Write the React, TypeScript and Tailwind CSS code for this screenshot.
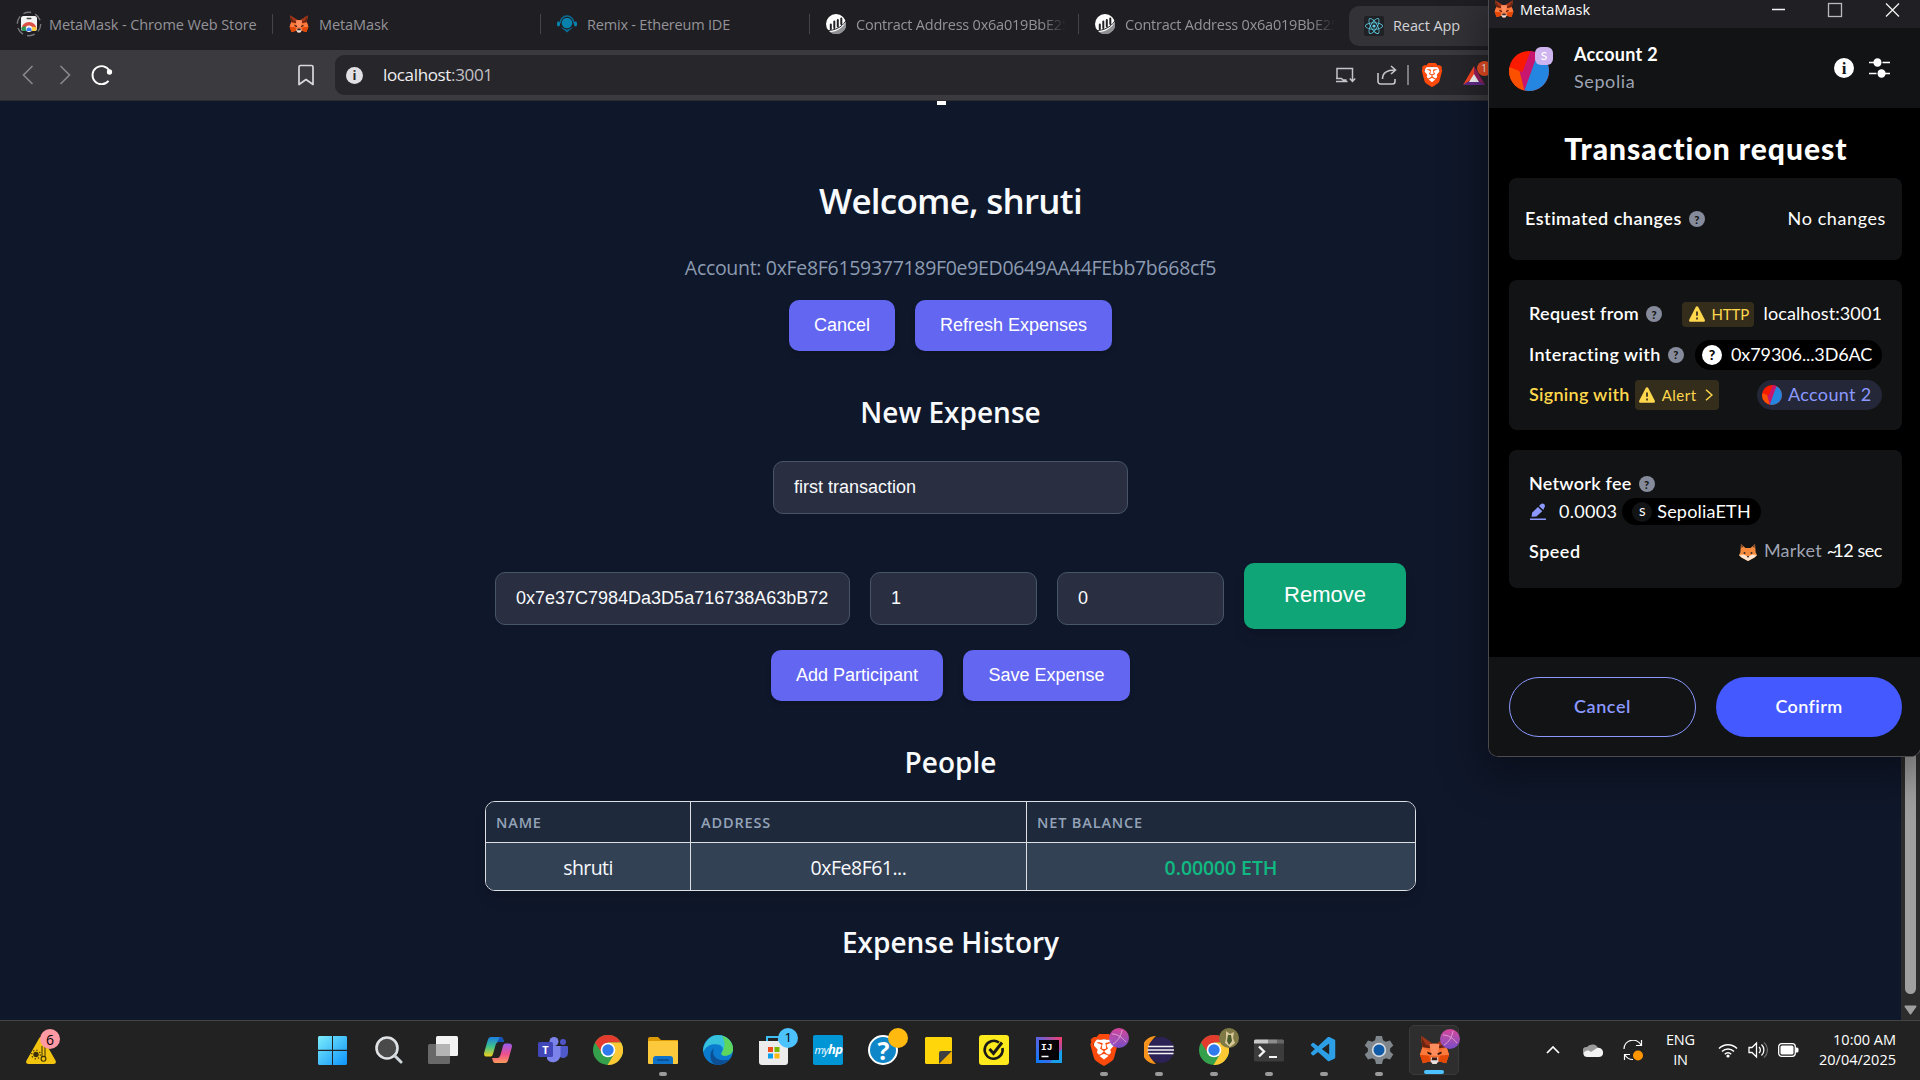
import type { ReactNode } from "react";
import { FaReact } from "react-icons/fa";
import { SiBrave } from "react-icons/si";
import { VscVscode } from "react-icons/vsc";

/* ---------- icons ---------- */

function Fox({ className }: { className: string }) {
  return (
    <svg viewBox="0 0 32 32" className={className} preserveAspectRatio="none">
      <path d="M2 1 13.5 9h5L30 1l-1.5 12L31 21l-3 9-8-2-2 3h-4l-2-3-8 2-3-9 2.500-8z" fill="#f5692a" />
      <path d="M2 1 13.500 9 11 14 3.500 13zM30 1 18.500 9 21 14l7.500-1z" fill="#6b2410" />
      <path d="M2 1l5 9 5 2 1.500-3zM30 1l-5 9-5 2-1.500-3z" fill="#a3361a" />
      <path d="M11 9.500h10L19.500 22h-7z" fill="#ff8d5d" />
      <path d="M1 21h9l2 7-8 2zM31 21h-9l-2 7 8 2z" fill="#e34807" />
      <path d="M3.500 13 11 17l1.500 5L1 21zM28.500 13 21 17l-1.500 5L31 21z" fill="#ff7a3d" />
      <path d="M12.500 24h7l.5 4-2 3h-4l-2-3z" fill="#e6e1e0" />
      <path d="M13.500 24h5l.5 3h-6z" fill="#3a1a12" />
      <path d="M8.500 17.500l4.500 2-.5 1.800-3.500-1.300zM23.500 17.500l-4.500 2 .5 1.800 3.500-1.300z" fill="#32120b" />
    </svg>
  );
}

function MarketFox() {
  return (
    <svg viewBox="0 0 18 18" className="h-[18px] w-[18px]">
      <path d="M2 1l4.500 4h5L16 1l.7 8.500L18 12l-2.500 2.500L9 18l-6.500-3.500L0 12l1.300-2.500z" fill="#f58a3c" />
      <path d="M2 1l.7 4L4.500 3.500zM16 1l-.7 4-1.800-1.500z" fill="#5b3a2e" />
      <path d="M0 12l4.500-.5L9 13.500l4.500-2 4.500.5-2.500 2.500L9 18l-6.500-3.500z" fill="#fbe3cf" />
      <circle cx="5.500" cy="10" r="1" fill="#3b2a24" />
      <circle cx="12.500" cy="10" r="1" fill="#3b2a24" />
      <path d="M7.800 13h2.400L9 15z" fill="#3b2a24" />
    </svg>
  );
}

function WebStore() {
  return (
    <svg viewBox="0 0 26 26" className="h-[26px] w-[26px]">
      <circle cx="13" cy="13" r="11.700" fill="none" stroke="#77767a" strokeWidth="1.400" strokeDasharray="8 4.250" />
      <rect x="5" y="5" width="16" height="15" rx="2.500" fill="#f3f3f3" />
      <rect x="10.500" y="6.800" width="5" height="1.500" rx=".7" fill="#444" />
      <path d="M5.500 18a7.500 7 0 0 1 15 0z" fill="#dd5144" />
      <path d="M5.500 16.500V18a2 2 0 0 0 2 2h5L9 15z" fill="#2d9a52" />
      <path d="M20.500 16.500V18a2 2 0 0 1-2 2h-5l3-4.500z" fill="#fccc3a" />
      <circle cx="13" cy="17.700" r="3.200" fill="#f3f3f3" />
      <path d="M10.500 19.900a2.600 2.600 0 1 1 5 0z" fill="#3c7df0" />
    </svg>
  );
}

function Remix() {
  return (
    <svg viewBox="0 0 20 18" className="h-[18px] w-[20px]">
      <path d="M3 8.500a7 7.500 0 0 1 14 0" fill="none" stroke="#0a6c93" strokeWidth="1.500" />
      <rect x="0" y="6.500" width="3" height="5" rx="1.400" fill="#0881ad" />
      <rect x="17" y="6.500" width="3" height="5" rx="1.400" fill="#0881ad" />
      <circle cx="10" cy="8" r="5.300" fill="#0881ad" />
      <path d="M3.500 12l6.500 2.800 6.500-2.800L10 17.500z" fill="#0a6c93" />
    </svg>
  );
}

function Etherscan() {
  return (
    <svg viewBox="0 0 20 20" className="h-5 w-5">
      <circle cx="10" cy="10" r="10" fill="#fff" />
      <path d="M4 18C11 18 17 13.500 20 8A10 10 0 0 1 4 18z" fill="#8f9094" />
      <path d="M4.800 10.500v4.500M8.300 7.500v6.500M11.800 6v6.500M15.300 4.500V10" stroke="#222126" strokeWidth="2" strokeLinecap="round" />
      <path d="M1.500 16.500c7 0 14-3 18.300-9.500" stroke="#222126" strokeWidth="1" fill="none" />
    </svg>
  );
}

function Chrome({ className }: { className: string }) {
  return (
    <svg viewBox="0 0 30 30" className={className}>
      <circle cx="15" cy="15" r="15" fill="#34a04c" />
      <path d="M2 7.500A15 15 0 0 1 28 7.500H15L9 18z" fill="#e33b2e" />
      <path d="M28 7.500A15 15 0 0 1 14.500 30L21.500 18.500 15 7.500z" fill="#fcc934" />
      <circle cx="15" cy="15" r="7.300" fill="#fff" />
      <circle cx="15" cy="15" r="5.700" fill="#2f7bed" />
    </svg>
  );
}

function Lion({ className }: { className: string }) {
  return (
    <svg viewBox="0 0 24 24" className={className}>
      <path d="M5 4h14l1 8-3 7-5 4-5-4-3-7z" fill="#fff" />
      <SiBrave size={24} color="#fb4a0b" />
    </svg>
  );
}

function Edge() {
  return (
    <svg viewBox="0 0 30 30" className="h-[30px] w-[30px]">
      <circle cx="15" cy="15" r="15" fill="#0b7bd0" />
      <path d="M1 11C4 3 10 0 15 0c9 0 15 6.500 15 13.500 0 5-4 7-8 7-3 0-4.500-1.500-3-3.500 2-3 .5-7-4.500-7.500C8 8.500 3 11 .3 17 0 15 .2 13 1 11z" fill="#36c2dc" />
      <path d="M19 .7c7 2 11 7.500 11 13 0 5-4 7-8 7-3 0-4.500-1.500-3-3.500 4-6 3-11 0-16.500z" fill="#5cd65c" />
      <path d="M11 13c-3 7 2 14.500 15 11.500A15 15 0 0 1 12 29.700C6 26 6 17 11 13z" fill="#0c4f95" />
    </svg>
  );
}

function Win() {
  return (
    <svg viewBox="0 0 29 29" className="h-[29px] w-[29px]">
      <defs>
        <linearGradient id="win" x1="0" y1="0" x2="1" y2="1">
          <stop offset="0" stopColor="#7cecfb" />
          <stop offset="1" stopColor="#0d93fa" />
        </linearGradient>
      </defs>
      <path d="M1 0h13v13.800H0V1zM15 0h13l1 1v12.800H15zM0 15h14v14H1l-1-1zM15 15h14v13l-1 1H15z" fill="url(#win)" />
    </svg>
  );
}

function Search() {
  return (
    <svg viewBox="0 0 28 28" className="h-[28px] w-[28px]">
      <circle cx="12" cy="12" r="10.500" fill="#4a4a4b" stroke="#dfe3e6" strokeWidth="2.600" />
      <path d="M19.500 19.500 26 26" stroke="#d0d6da" strokeWidth="3" strokeLinecap="round" />
    </svg>
  );
}

function TaskView() {
  return (
    <svg viewBox="0 0 30 28" className="h-[28px] w-[30px]">
      <rect x="0" y="8" width="22" height="20" rx="1.500" fill="#686868" />
      <rect x="8" y="0" width="22" height="20" rx="1.500" fill="#f3f3f3" />
      <path d="M8 8h14v12H8z" fill="#b4b4b4" />
    </svg>
  );
}

function Copilot() {
  return (
    <svg viewBox="0 0 28 26" className="h-[26px] w-[28px]">
      <defs>
        <linearGradient id="cpa" x1="0" y1="0" x2="0" y2="1">
          <stop offset="0" stopColor="#1b7fe0" />
          <stop offset=".5" stopColor="#3fc28a" />
          <stop offset="1" stopColor="#f3cf1b" />
        </linearGradient>
        <linearGradient id="cpb" x1="0" y1="0" x2="0" y2="1">
          <stop offset="0" stopColor="#9a5cf0" />
          <stop offset=".55" stopColor="#ee4f8b" />
          <stop offset="1" stopColor="#fb9a5a" />
        </linearGradient>
      </defs>
      <path d="M7 0h9c3 0 3 2 4 5h-5c-2 0-3 1-4 5l-2 7c-.6 2-1.500 2.500-3 2.500H3c-3 0-3.500-2-2.500-5L3.500 4C4.300 1.500 5 0 7 0z" fill="url(#cpa)" />
      <path d="M21 26h-9c-3 0-3-2-4-5h5c2 0 3-1 4-5l2-7c.6-2 1.500-2.500 3-2.500h3c3 0 3.500 2 2.500 5L24.500 22c-.8 2.500-1.500 4-3.500 4z" fill="url(#cpb)" />
      <path d="M16 0c3 0 3 2 4 5h-5c-1.500 0-2.500.5-3.300 2.500z" fill="#1751b8" />
    </svg>
  );
}

function Teams() {
  return (
    <svg viewBox="0 0 30 26" className="h-[26px] w-[30px]">
      <circle cx="25" cy="5" r="3" fill="#4f55c6" />
      <circle cx="16" cy="4.500" r="4.500" fill="#7b83eb" />
      <path d="M21 9h8a1 1 0 0 1 1 1v6a5 5 0 0 1-8 4z" fill="#5059c9" />
      <path d="M9 9h13.500v9a7.500 8 0 0 1-13.500 4z" fill="#7b83eb" />
      <rect x="0" y="5" width="15" height="15" rx="1.500" fill="#4147b8" />
      <text x="7.500" y="16.500" textAnchor="middle" fontSize="11" fontWeight="700" fill="#fff" fontFamily="Open Sans">T</text>
    </svg>
  );
}

function Folder() {
  return (
    <svg viewBox="0 0 30 27" className="h-[27px] w-[30px]">
      <path d="M0 2a2 2 0 0 1 2-2h8l3 3H30v6H0z" fill="#dc9a07" />
      <rect x="0" y="4" width="30" height="23" rx="1" fill="#fdc93c" />
      <path d="M5 27v-5a3 3 0 0 1 3-3h14a3 3 0 0 1 3 3v5z" fill="#0f72c9" />
      <path d="M9 23h12" stroke="#0a4585" strokeWidth="1.300" />
    </svg>
  );
}

function Store() {
  return (
    <svg viewBox="0 0 29 29" className="h-[29px] w-[29px]">
      <path d="M8 6V1h12v5" fill="none" stroke="#3ebdf3" strokeWidth="2" />
      <path d="M0 5h29v21a3 3 0 0 1-3 3H3a3 3 0 0 1-3-3z" fill="#ececec" />
      <path d="M9 11h5v5H9z" fill="#f04e1f" />
      <path d="M15.500 11h5v5h-5z" fill="#7ab800" />
      <path d="M9 17.500h5v5H9z" fill="#0a9fea" />
      <path d="M15.500 17.500h5v5h-5z" fill="#fdb813" />
    </svg>
  );
}

function IntelliJ() {
  return (
    <svg viewBox="0 0 26 26" className="h-[26px] w-[26px]">
      <defs>
        <linearGradient id="ij" x1="0" y1="1" x2="1" y2="0">
          <stop offset="0" stopColor="#087cfa" />
          <stop offset=".5" stopColor="#5a63e0" />
          <stop offset="1" stopColor="#fe3c68" />
        </linearGradient>
      </defs>
      <rect width="26" height="26" fill="url(#ij)" />
      <path d="M14 26h12V12z" fill="#18a0ea" />
      <rect x="3" y="3" width="20" height="20" fill="#050208" />
      <text x="5" y="13" fontSize="9.500" fontWeight="700" fill="#fff" fontFamily="Liberation Mono">IJ</text>
      <path d="M5.500 19.500h7" stroke="#fff" strokeWidth="1.500" />
    </svg>
  );
}

function Eclipse() {
  return (
    <svg viewBox="0 0 30 28" className="h-[28px] w-[30px]">
      <path d="M12 0A14 14 0 0 0 12 28 18 18 0 0 1 12 0z" fill="#f7941e" />
      <circle cx="17" cy="14" r="13" fill="#2c2255" />
      <path d="M4 10.500h25.500M3.500 14h26.500M4 17.500h25.500" stroke="#f5f5f5" strokeWidth="1.600" />
    </svg>
  );
}

function Terminal() {
  return (
    <svg viewBox="0 0 30 22" className="h-[23px] w-[30px]">
      <rect width="30" height="22" rx="1.500" fill="#3c3c3c" />
      <path d="M0 1.500A1.500 1.500 0 0 1 1.500 0H14v4H0z" fill="#c9c9c9" />
      <path d="M14 0h9v4h-9z" fill="#8c8c8c" />
      <path d="M23 0h5.500A1.500 1.500 0 0 1 30 1.500V4h-7z" fill="#666" />
      <path d="M5 7l5 5-5 5" fill="none" stroke="#f5f5f5" strokeWidth="2.400" />
      <path d="M15 17.500h8" stroke="#f5f5f5" strokeWidth="2" />
    </svg>
  );
}

function Gear() {
  return (
    <svg viewBox="0 0 30 30" className="h-[30px] w-[30px]">
      <path
        d="M12 1h6l1 4.200 2.800 1.600L26 5.500l3.300 5-3.200 3v3l3.200 3-3.300 5-4.200-1.300-2.800 1.600L18 29h-6l-1-4.200-2.800-1.600L4 24.500l-3.300-5 3.200-3v-3l-3.200-3 3.300-5 4.200 1.300L11 5.200z"
        fill="#7f868c"
      />
      <circle cx="15" cy="15" r="7.200" fill="#d5dbe0" />
      <circle cx="15" cy="15" r="5.500" fill="#0f5ba8" />
    </svg>
  );
}

function Weather() {
  return (
    <svg viewBox="0 0 30 28" className="h-[28px] w-[30px]">
      <path d="M13 2.500c1-2 3-2 4 0l12.500 22c1 2 0 3.500-2 3.500h-25c-2 0-3-1.500-2-3.500z" fill="#f2c40f" />
      <circle cx="10" cy="18.500" r="2.700" fill="#3a2f08" />
      <circle cx="10" cy="18.500" r="4.300" fill="none" stroke="#3a2f08" strokeWidth="1.300" strokeDasharray="1.200 2.170" />
      <path d="M16 10v11M19 10v11" stroke="#3a2f08" strokeWidth="1" />
      <circle cx="17.500" cy="22.800" r="2.400" fill="none" stroke="#3a2f08" strokeWidth="1.100" />
    </svg>
  );
}

function Jazzicon({ className }: { className: string }) {
  return (
    <svg viewBox="0 0 40 40" className={className}>
      <defs>
        <clipPath id="jazz">
          <circle cx="20" cy="20" r="20" />
        </clipPath>
      </defs>
      <g clipPath="url(#jazz)">
        <rect width="40" height="40" fill="#fa1a00" />
        <path d="M0 16l10.500 4 6 18-1 2H0z" fill="#fb5000" />
        <path d="M21.500 0H30L15.500 40 10.500 20l3 1z" fill="#c81670" />
        <path d="M30 0h10v40H15.300L26 10z" fill="#2486e1" />
      </g>
    </svg>
  );
}

function Help() {
  return (
    <span className="flex h-4 w-4 shrink-0 items-center justify-center rounded-full bg-[#858b9a] font-['Lato',sans-serif] text-[11px] leading-none font-black text-[#121314]">
      ?
    </span>
  );
}

function Warn({ className }: { className: string }) {
  return (
    <svg viewBox="0 0 16 16" className={className}>
      <path d="M6.900.8a1.300 1.300 0 0 1 2.200 0L15.700 13.500c.6 1.200 0 2.300-1.200 2.300h-13C.3 15.800-.3 14.700.3 13.500z" fill="#ffd84d" />
      <path d="M8 5.500v4.200M8 11.500v2" stroke="#352d1c" strokeWidth="1.700" />
    </svg>
  );
}

/* ---------- browser chrome ---------- */

function Tab({ icon, children, width, fade }: { icon: ReactNode; children: ReactNode; width: string; fade?: boolean }) {
  return (
    <div className={`flex h-full shrink-0 items-center ${width}`}>
      {icon}
      <span
        className={`mt-[2px] ml-[10px] text-[14.5px] whitespace-nowrap text-[#949398] ${
          fade ? "tracking-[-0.22px] [mask-image:linear-gradient(to_right,black_185px,transparent_210px)]" : "tracking-[-0.1px]"
        }`}
      >
        {children}
      </span>
    </div>
  );
}

const Separator = () => <div className="h-5 w-px shrink-0 bg-[#45444a]" />;

function TabStrip() {
  return (
    <div className="flex h-[50px] items-center bg-[#1f1e23] pb-[2px] pl-4">
      <Tab icon={<WebStore />} width="w-[256px] [&>span]:ml-[7px]">MetaMask - Chrome Web Store</Tab>
      <Separator />
      <Tab icon={<Fox className="ml-4 h-[18px] w-5" />} width="w-[267px]">MetaMask</Tab>
      <Separator />
      <Tab icon={<span className="ml-4"><Remix /></span>} width="w-[268px] [&>span+span]:tracking-[-0.2px]">Remix - Ethereum IDE</Tab>
      <Separator />
      <Tab icon={<span className="ml-4"><Etherscan /></span>} width="w-[268px]" fade>Contract Address 0x6a019BbE25</Tab>
      <Separator />
      <Tab icon={<span className="ml-4"><Etherscan /></span>} width="w-[270px]" fade>Contract Address 0x6a019BbE25</Tab>
      <div className="mt-[3px] flex h-10 w-[200px] items-center rounded-l-[10px] bg-[#333237] pl-[15px]">
        <span className="flex h-5 w-5 items-center justify-center rounded-[2px] bg-[#202124]">
          <FaReact size={18} color="#5fcde6" />
        </span>
        <span className="ml-[9px] text-[14.5px] tracking-[-0.1px] text-[#d5d4d8]">React App</span>
      </div>
    </div>
  );
}

function Toolbar() {
  return (
    <div className="flex h-[51px] items-center border-b border-[#2c2b2f] bg-[#3b3a3f] pl-[22px]">
      <svg viewBox="0 0 12 20" className="h-5 w-3" fill="none" stroke="#89888c" strokeWidth="1.600">
        <path d="M10.500 1 1.500 10l9 9" />
      </svg>
      <svg viewBox="0 0 12 20" className="ml-[25px] h-5 w-3" fill="none" stroke="#89888c" strokeWidth="1.600">
        <path d="M1.500 1l9 9-9 9" />
      </svg>
      <svg viewBox="0 0 22 22" className="ml-[20px] h-[22px] w-[22px]" fill="none" stroke="#fff" strokeWidth="1.900">
        <path d="M17.500 16.800A9 9 0 1 1 18.500 7" />
        <circle cx="18.500" cy="8" r="1.700" fill="#fff" />
      </svg>
      <svg viewBox="0 0 16 22" className="ml-[185px] h-[22px] w-4" fill="none" stroke="#d9d8dc" strokeWidth="1.700" strokeLinejoin="round">
        <path d="M1 3a1.500 1.500 0 0 1 1.500-1.500h11A1.500 1.500 0 0 1 15 3v17.500L8 15.500 1 20.500z" />
      </svg>
      <div className="ml-[21px] flex h-10 flex-1 items-center rounded-l-[9px] bg-[#27262b] pl-[11px]">
        <span className="flex h-[17px] w-[17px] items-center justify-center rounded-full bg-[#e1e0e5] text-[13px] leading-none font-bold text-[#27262b]">i</span>
        <span className="ml-[20px] w-[110px] text-[17px] tracking-[-0.35px] whitespace-nowrap text-[#eeeef0]">
          localhost<span className="text-[#c2c1c6]">:3001</span>
        </span>
        <svg viewBox="0 0 21 16" className="ml-[842px] h-4 w-[21px]" fill="none" stroke="#c5c4c9" strokeWidth="1.500">
          <path d="M12.500 14.500H1M2 11V1.500h15.500V8M1 11.500h5.500l1.500 1.500h3.500M17.500 6v8M14.800 11.500l2.700 3 2.700-3" />
        </svg>
        <svg viewBox="0 0 20 20" className="ml-[21px] h-5 w-5" fill="none" stroke="#c5c4c9" strokeWidth="1.600">
          <path d="M1 8v8.500A2.500 2.500 0 0 0 3.500 19h12a2.500 2.500 0 0 0 2.500-2.500V14" />
          <path d="M5.500 14c0-6 4-9 12.500-9M14 1l4.500 4L14 9" />
        </svg>
        <div className="ml-[10px] h-5 w-[1.500px] bg-[#7c7b80]" />
        <Lion className="ml-[11px] h-6 w-6" />
        <div className="relative ml-[19px]">
          <svg viewBox="0 0 22 19" className="h-[19px] w-[22px]">
            <path d="M11 0 0 19l11-7z" fill="#ff4724" />
            <path d="M11 0l11 19-11-7z" fill="#9e1f63" />
            <path d="M0 19h22l-11-7z" fill="#662d91" />
            <path d="M11 8l5 8H6z" fill="#fff" />
          </svg>
          <span className="absolute -top-[5px] left-[14px] flex h-[15px] w-[15px] items-center justify-center rounded-full bg-[#f04e23] text-[10px] text-white">1</span>
        </div>
      </div>
    </div>
  );
}

/* ---------- expense page ---------- */

function Button({ children, className }: { children: ReactNode; className: string }) {
  return (
    <button className={`h-[51px] rounded-[10px] bg-[#6366f1] font-['Liberation_Sans',sans-serif] text-[18px] whitespace-nowrap text-white shadow-md ${className}`}>
      {children}
    </button>
  );
}

function Field({ value, className }: { value: string; className: string }) {
  return (
    <div className={`flex h-[53px] items-center overflow-hidden rounded-[10px] border border-[#475569] bg-[#292e41] px-5 font-['Liberation_Sans',sans-serif] text-[18px] text-[#f8fafc] ${className}`}>
      {value}
    </div>
  );
}

function Page() {
  return (
    <main className="flex min-h-0 flex-1 bg-[#0f172a]">
      <div className="flex min-w-0 flex-1 flex-col items-center text-[#f8fafc]">
        <div className="mr-[18px] h-[4px] w-[9px] bg-white" />
        <h1 className="mt-[71px] flex h-[50px] items-center text-[35px] font-semibold tracking-[-0.75px]">Welcome, shruti</h1>
        <p className="mt-[28px] flex h-[28px] items-center text-[19.5px] tracking-[-0.31px] whitespace-nowrap text-[#8c9bb1]">
          Account: 0xFe8F6159377189F0e9ED0649AA44FEbb7b668cf5
        </p>
        <div className="mt-[18px] flex gap-5">
          <Button className="w-[106px]">Cancel</Button>
          <Button className="w-[197px]">Refresh Expenses</Button>
        </div>
        <h2 className="mt-[41px] flex h-[40px] items-center text-[28px] font-semibold">New Expense</h2>
        <Field value="first transaction" className="mt-[29px] w-[355px]" />
        <div className="mt-[48px] flex h-[67px] items-center gap-5">
          <Field value="0x7e37C7984Da3D5a716738A63bB72" className="mt-[6px] w-[355px]" />
          <Field value="1" className="mt-[6px] w-[167px]" />
          <Field value="0" className="mt-[6px] w-[167px]" />
          <button className="h-[66px] w-[162px] rounded-[10px] bg-[#10a577] pb-[2px] font-['Liberation_Sans',sans-serif] text-[22px] text-white shadow-lg">
            Remove
          </button>
        </div>
        <div className="mt-[21px] flex gap-5">
          <Button className="w-[172px]">Add Participant</Button>
          <Button className="w-[167px]">Save Expense</Button>
        </div>
        <h2 className="mt-[41px] flex h-[40px] items-center text-[28px] font-semibold">People</h2>
        <div className="mt-[19px] grid w-[931px] grid-cols-[205px_336px_388px] overflow-hidden rounded-[10px] border border-[#dcdfe3] shadow-lg">
          {["NAME", "ADDRESS", "NET BALANCE"].map((h, i) => (
            <div key={h} className={`h-[41px] border-b border-[#dcdfe3] bg-[#1e293b] pl-[10px] text-[14.5px] leading-[41px] font-semibold tracking-[0.85px] text-[#94a3b8] ${i < 2 ? "border-r" : ""}`}>
              {h}
            </div>
          ))}
          <div className="h-[47px] border-r border-[#dcdfe3] bg-[#334155] text-center text-[19.5px] leading-[49px] tracking-[-0.6px]">shruti</div>
          <div className="h-[47px] border-r border-[#dcdfe3] bg-[#334155] text-center text-[19.5px] leading-[49px] tracking-[-0.5px]">0xFe8F61...</div>
          <div className="h-[47px] bg-[#334155] text-center text-[19.5px] leading-[49px] font-semibold tracking-[-0.1px] text-[#10b981]">0.00000 ETH</div>
        </div>
        <h2 className="mt-[31px] flex h-[40px] items-center text-[28px] font-semibold">Expense History</h2>
      </div>
      <div className="flex w-[19px] flex-col items-center justify-end bg-[#2c2c2c] pb-[5px]">
        <div className="mb-[11px] w-[11px] flex-1 rounded-b-full bg-[#9f9f9f]" />
        <svg viewBox="0 0 13 10" className="h-[10px] w-[13px]">
          <path d="M1.500.500h10c1 0 1.300.8.8 1.500L7.300 9a1 1 0 0 1-1.600 0L.700 2C.2 1.300.5.500 1.500.500z" fill="#9f9f9f" />
        </svg>
      </div>
    </main>
  );
}

/* ---------- wallet window ---------- */

function Label({ children, className = "" }: { children: ReactNode; className?: string }) {
  return <span className={`-mt-[2px] text-[18px] leading-none font-semibold whitespace-nowrap ${className}`}>{children}</span>;
}

function Wallet() {
  return (
    <section className="absolute top-0 left-[1488px] flex h-[757px] w-[433px] flex-col overflow-hidden rounded-b-[10px] border border-t-0 border-[#4a4a4f] bg-black font-['Lato',sans-serif] text-white shadow-[0_12px_40px_8px_rgba(0,0,0,0.35)]">
      <div className="flex h-7 items-start bg-[#201f24] pl-[5px]">
        <Fox className="h-[18px] w-5" />
        <span className="ml-[6px] w-[71px] font-['Open_Sans',sans-serif] text-[14.5px] leading-[20px]">MetaMask</span>
        <svg viewBox="0 0 130 28" className="ml-[180px] h-7 w-[130px]" fill="none" stroke="#f2f2f2" strokeWidth="1.300">
          <path d="M1 9.500h13M115 3.500l13 13M128 3.500l-13 13" />
          <rect x="57.500" y="3.500" width="13" height="13" stroke="#b9b9bb" />
        </svg>
      </div>
      <header className="flex h-20 items-center bg-[#121314] pl-5">
        <div className="relative mt-[6px] h-10 w-10">
          <Jazzicon className="h-10 w-10" />
          <span className="absolute -top-[4px] left-[26px] flex h-[18px] w-[18px] items-center justify-center rounded-[6px] bg-[#cfb5f0] text-[12px] font-medium">S</span>
        </div>
        <div className="-mt-[1px] ml-[25px] flex w-[90px] flex-col text-[18px] leading-[27px]">
          <span className="font-bold tracking-[0.3px]">Account 2</span>
          <span className="tracking-[0.6px] text-[#9ea4b3]">Sepolia</span>
        </div>
        <span className="ml-[170px] flex h-5 w-5 items-center justify-center rounded-full bg-white font-['Liberation_Serif',serif] text-[17px] leading-none font-bold text-[#121314]">i</span>
        <svg viewBox="0 0 21 20" className="ml-[15px] h-5 w-[21px]" stroke="#fff" strokeWidth="1.700">
          <path d="M0 4.500h21M0 15.500h21" />
          <circle cx="8.500" cy="4.500" r="3.300" fill="#fff" />
          <circle cx="12.500" cy="15.500" r="3.300" fill="#fff" />
          <path d="M13 1.500v6M8 12.500v6" stroke="#121314" strokeWidth="1" />
        </svg>
      </header>
      <h3 className="mt-[21px] h-[38px] pl-[3px] text-center text-[30px] leading-[38px] font-black tracking-[1px]">Transaction request</h3>
      <div className="mx-5 mt-[11px] flex h-[82px] w-[393px] items-center justify-between rounded-[8px] bg-[#121314] px-4">
        <span className="flex items-center gap-[7px]">
          <Label className="tracking-[0.5px]">Estimated changes</Label>
          <Help />
        </span>
        <span className="-mt-px text-[18px] tracking-[0.6px]">No changes</span>
      </div>

      <div className="mx-5 mt-5 flex h-[150px] w-[393px] flex-col rounded-[8px] bg-[#121314] px-5 pt-[14px]">
        <div className="flex h-[40px] items-center">
          <Label className="tracking-[0.25px]">Request from</Label>
          <span className="ml-[7px]"><Help /></span>
          <span className="ml-auto flex h-[25px] w-[72px] items-center rounded-[4px] bg-[#352d1c] pl-[7px] text-[15px] tracking-[-0.2px] text-[#ffd84d]">
            <Warn className="mr-[7px] h-4 w-4" />HTTP
          </span>
          <span className="-mt-[2px] ml-[10px] text-[18px] tracking-[0.1px]">localhost:3001</span>
        </div>
        <div className="flex h-[41px] items-center">
          <Label className="tracking-[0.4px]">Interacting with</Label>
          <span className="ml-[7px]"><Help /></span>
          <span className="ml-auto flex h-[30px] w-[187px] items-center rounded-full bg-black pl-[7px] text-[18px] tracking-[-0.1px]">
            <span className="mr-[9px] flex h-5 w-5 items-center justify-center rounded-full bg-white text-[14px] leading-none font-black text-black">?</span>
            <span className="-mt-px">0x79306...3D6AC</span>
          </span>
        </div>
        <div className="flex h-[40px] items-center">
          <Label className="tracking-[0.28px] text-[#ffd84d]">Signing with</Label>
          <span className="ml-[5px] flex h-[30px] w-[84px] items-center rounded-[4px] bg-[#352d1c] pl-[4px] text-[15px] tracking-[0.5px] text-[#ffd84d]">
            <Warn className="mr-[7px] h-4 w-4" />Alert
            <svg viewBox="0 0 8 12" className="ml-[8px] h-3 w-2" fill="none" stroke="#ffd84d" strokeWidth="1.500">
              <path d="M1 .7 7 6l-6 5.300" />
            </svg>
          </span>
          <span className="ml-auto flex h-[30px] w-[125px] items-center rounded-full bg-[#242738] pl-[5px] text-[18px] tracking-[0.35px] text-[#8b99ff]">
            <Jazzicon className="mr-[6px] h-5 w-5" />
            <span className="-mt-[2px]">Account 2</span>
          </span>
        </div>
      </div>

      <div className="mx-5 mt-5 flex h-[138px] w-[393px] flex-col rounded-[8px] bg-[#121314] px-5 pt-[22px]">
        <div className="flex h-[24px] items-center gap-[7px]">
          <Label className="tracking-[0.25px]">Network fee</Label>
          <Help />
        </div>
        <div className="mt-[2px] flex h-[27px] items-center">
          <svg viewBox="0 0 17 17" className="ml-[1px] h-[17px] w-[17px]" fill="#8b99ff">
            <path d="M0 15.500h16V17H0z" />
            <path d="M1.500 13.800l.8-4.300L8 4l4.300 4.300-6 5.200z" />
            <path d="M9 3l1.700-1.700c1-1 2.500-1 3.500 0s1 2.500 0 3.500L13.300 7z" />
          </svg>
          <span className="-mt-px ml-[12px] text-[18px] tracking-[0.3px]">0.0003</span>
          <span className="ml-[5px] flex h-[27px] w-[139px] items-center rounded-full bg-black pl-[10px] text-[18px] tracking-[0.2px]">
            <span className="mr-[5px] flex h-5 w-5 items-center justify-center rounded-full bg-[#121314] text-[12px] leading-none font-medium">S</span>
            <span className="-mt-px">SepoliaETH</span>
          </span>
        </div>
        <div className="mt-[13px] flex h-[27px] items-center">
          <Label className="tracking-[0.5px]">Speed</Label>
          <span className="ml-auto"><MarketFox /></span>
          <span className="-mt-[2px] ml-[7px] text-[18px] tracking-[0.25px] text-[#9ea4b3]">Market</span>
          <span className="-mt-[2px] ml-[5px] text-[18px] tracking-[-0.45px]">
            <span className="tracking-[-4px]">~</span>12 sec
          </span>
        </div>
      </div>

      <footer className="mt-auto flex h-[99px] gap-5 bg-[#121314] pt-5 pr-[18px] pl-5">
        <button className="h-[60px] w-[187px] rounded-full border border-[#8b99ff] pb-[2px] text-[18px] font-semibold tracking-[0.6px] text-[#8b99ff]">Cancel</button>
        <button className="h-[60px] w-[186px] rounded-full bg-[#4459ff] pb-[2px] text-[18px] font-semibold tracking-[0.4px]">Confirm</button>
      </footer>
    </section>
  );
}

/* ---------- taskbar ---------- */

type App = { icon: ReactNode; badge?: ReactNode; state?: "open" | "active" };

const orb = (
  <span className="block h-[20px] w-[20px] rounded-full bg-linear-to-b from-[#e044a0] to-[#7c4dd0] opacity-95">
    <svg viewBox="0 0 20 20" className="h-5 w-5" fill="none" stroke="#e9a5d8" strokeWidth="1">
      <path d="M3 6c5 0 10 3 14 8M13 2c-1 6-4 11-9 14" />
    </svg>
  </span>
);

const apps: App[] = [
  { icon: <Win /> },
  { icon: <Search /> },
  { icon: <TaskView /> },
  { icon: <Copilot /> },
  { icon: <Teams /> },
  { icon: <Chrome className="h-[30px] w-[30px]" /> },
  { icon: <Folder />, state: "open" },
  { icon: <Edge /> },
  { icon: <Store />, badge: <span className="flex h-5 w-5 items-center justify-center rounded-full bg-[#4cc2ff] text-[13px] text-black">1</span> },
  { icon: <span className="flex h-[30px] w-[30px] items-center justify-center rounded-[2px] bg-[#0096d6] text-[11px] tracking-[-0.6px] text-white italic">my<b className="text-[13px]">hp</b></span> },
  {
    icon: <span className="flex h-[30px] w-[30px] items-center justify-center rounded-full border-2 border-white bg-[#0e86c8] text-[25px] leading-none font-bold text-white">?</span>,
    badge: <span className="block h-5 w-5 rounded-full bg-[#ffb90f]" />,
  },
  {
    icon: (
      <svg viewBox="0 0 27 27" className="h-[27px] w-[27px]">
        <path d="M1 0h25l1 1v13L14 27H1l-1-1V1z" fill="#ffd60a" />
        <path d="M14 27V16a2 2 0 0 1 2-2h11z" fill="#3f3f42" />
        <path d="M14 27l13-13v12l-1 1z" fill="#f0b400" />
      </svg>
    ),
  },
  {
    icon: (
      <svg viewBox="0 0 30 30" className="h-[30px] w-[30px]">
        <rect width="30" height="30" rx="3" fill="#fdea1c" />
        <path d="M20 7.500A9 9 0 1 0 23.500 13" fill="none" stroke="#1a1a16" strokeWidth="2.600" />
        <path d="M10.500 14l4 4.500L23 7.500" fill="none" stroke="#1a1a16" strokeWidth="3" />
      </svg>
    ),
  },
  { icon: <IntelliJ /> },
  { icon: <Lion className="h-[32px] w-[32px]" />, badge: orb, state: "open" },
  { icon: <Eclipse />, state: "open" },
  {
    icon: <Chrome className="h-[30px] w-[30px]" />,
    badge: (
      <svg viewBox="0 0 20 20" className="h-5 w-5">
        <circle cx="10" cy="10" r="10" fill="#7f7a45" />
        <path d="M7 3l4 3 4-2-1 6 2 5-5 4-5-4 1-5z" fill="#d9c99a" />
        <path d="M9 7h3l1 6-3 4-2-4z" fill="#4a5a2c" />
      </svg>
    ),
    state: "open",
  },
  { icon: <Terminal />, state: "open" },
  { icon: <VscVscode size={30} color="#2c9fe6" />, state: "open" },
  { icon: <Gear />, state: "open" },
  { icon: <Fox className="h-[30px] w-[31px]" />, badge: orb, state: "active" },
];

function Taskbar() {
  return (
    <footer className="flex h-[60px] items-center border-t border-[#454545] bg-[#222222] pb-px text-[14.5px] text-white">
      <div className="relative ml-[26px]">
        <Weather />
        <span className="absolute -top-[7px] left-[14px] flex h-5 w-5 items-center justify-center rounded-full bg-[#ff99a4] text-[14px] text-black">6</span>
      </div>
      <div className="ml-[249px] flex">
        {apps.map((a, i) => (
          <div key={i} className="flex w-[55.1px] justify-center">
            <div className={`relative flex h-[50px] w-[50px] items-center justify-center rounded-[5px] ${i === 1 ? "pl-[2px]" : ""} ${a.state === "active" ? "border border-[#3a3a3a] bg-[#2e2e2e]" : ""}`}>
              {a.icon}
              {a.badge && <span className="absolute top-[3px] left-[30px]">{a.badge}</span>}
              {a.state === "open" && <span className="absolute -bottom-px h-1 w-2 rounded-full bg-[#9a9a9a]" />}
              {a.state === "active" && <span className="absolute bottom-0 h-1 w-5 rounded-full bg-[#4cc2ff]" />}
            </div>
          </div>
        ))}
      </div>
      <svg viewBox="0 0 14 8" className="ml-[84px] h-2 w-[14px]" fill="none" stroke="#fff" strokeWidth="1.700">
        <path d="M1 7l6-6 6 6" />
      </svg>
      <svg viewBox="0 0 20 13" className="ml-[23px] h-[13px] w-5">
        <path d="M3 11A4 4 0 0 1 4 3a6 5 0 0 1 11 1l-6 5z" fill="#9a9a9a" />
        <path d="M2 12.500C0 11 0 8 3 7c2-1 4 0 5 1l6-4c4-1 7 3 6 6-.5 2-2 3-4 3H4z" fill="#f2f2f2" />
      </svg>
      <svg viewBox="0 0 21 21" className="ml-5 h-[21px] w-[21px]" fill="none" stroke="#fff" strokeWidth="1.200">
        <path d="M1 9A9 9 0 0 1 18 5M18.500 0v5.500H13M10 19.500A9 9 0 0 1 2 15M1.500 20v-5.500H7" />
        <circle cx="15" cy="15.500" r="5" fill="#ff9500" stroke="none" />
      </svg>
      <div className="ml-[21px] w-[31px] text-center leading-5 tracking-[-0.2px]">ENG<br />IN</div>
      <svg viewBox="0 0 20 16" className="ml-[22px] h-4 w-5" fill="none" stroke="#fff" strokeWidth="1.500">
        <path d="M1 6.500a12.500 12.500 0 0 1 18 0M4 9.500a8.500 8.500 0 0 1 12 0M6.800 12.200a4.500 4.500 0 0 1 6.400 0" />
        <circle cx="10" cy="14" r="1.600" fill="#fff" stroke="none" />
      </svg>
      <svg viewBox="0 0 20 18" className="ml-[10px] h-[18px] w-5" fill="none" stroke="#fff" strokeWidth="1.300">
        <path d="M1 6.500h3L8.500 2v14L4 11.500H1zM11 6a4 4 0 0 1 0 6M13.500 3.500a7.500 7.500 0 0 1 0 11" />
        <path d="M16 1.500a10 10 0 0 1 0 15" stroke="#6b6b6b" />
      </svg>
      <svg viewBox="0 0 21 14" className="ml-[10px] h-[14px] w-[21px]">
        <rect x=".7" y=".7" width="16.600" height="12.600" rx="3" fill="none" stroke="#fff" strokeWidth="1.300" />
        <rect x="2.500" y="2.500" width="13" height="9" rx="1.500" fill="#fff" />
        <path d="M18 4.500h1a1.500 1.500 0 0 1 1.500 1.500v2A1.500 1.500 0 0 1 19 9.500h-1z" fill="#fff" />
      </svg>
      <div className="mr-[24px] ml-auto text-right leading-5">10:00 AM<br />20/04/2025</div>
    </footer>
  );
}

export default function App() {
  return (
    <div className="relative flex h-[1080px] w-[1920px] flex-col overflow-hidden bg-[#0f172a] font-['Open_Sans','Noto_Sans',sans-serif]">
      <TabStrip />
      <Toolbar />
      <Page />
      <Wallet />
      <Taskbar />
    </div>
  );
}
